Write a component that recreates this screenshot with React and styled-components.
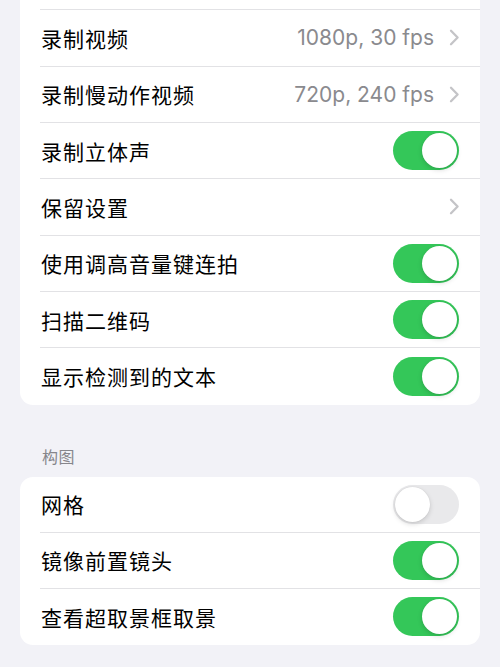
import styled, { createGlobalStyle } from "styled-components";

const GlobalStyle = createGlobalStyle`
  html, body {
    margin: 0;
    padding: 0;
    background: #f2f2f7;
  }
  body {
    font-family: Inter, "Noto Sans CJK SC", sans-serif;
    -webkit-font-smoothing: antialiased;
  }
`;

const Page = styled.div`
  width: 500px;
  height: 667px;
  overflow: hidden;
  background: #f2f2f7;
  display: flex;
  flex-direction: column;
`;

const Card = styled.div`
  margin: ${(p) => p.$top || 0}px 20px 0;
  background: #fff;
  border-radius: 13px;
  overflow: hidden;
  display: flex;
  flex-direction: column;
`;

const Row = styled.div`
  height: ${(p) => p.$h}px;
  padding-left: 20px;
  display: flex;
  flex-shrink: 0;
`;

const RowBody = styled.div`
  flex: 1;
  display: flex;
  align-items: center;
  padding: 0 21px 0 1px;
  border-bottom: ${(p) => (p.$last ? "none" : "1px solid #e2e2e5")};
  box-sizing: border-box;
`;

const Label = styled.span`
  flex: 1;
  font-size: 21px;
  color: #000;
  letter-spacing: 1px;
`;

const Value = styled.span`
  font-size: 21px;
  color: #8a8a8e;
  margin-right: 15px;
`;

const Header = styled.div`
  margin: 41px 0 9px;
  padding: 0 42px;
  font-size: 16px;
  line-height: 22px;
  color: #86868b;
  letter-spacing: 0.5px;
`;

const Track = styled.div`
  width: 66px;
  height: 39px;
  border-radius: 20px;
  background: ${(p) => (p.$on ? "#34c759" : "#e9e9eb")};
  display: flex;
  align-items: center;
  justify-content: ${(p) => (p.$on ? "flex-end" : "flex-start")};
  padding: 0 2px;
  box-sizing: border-box;
`;

const Knob = styled.div`
  width: 35px;
  height: 35px;
  border-radius: 50%;
  background: #fff;
  box-shadow: 0 2px 5px rgba(0, 0, 0, 0.15), 0 0 1px rgba(0, 0, 0, 0.12);
`;

function Switch({ on }) {
  return (
    <Track $on={on}>
      <Knob />
    </Track>
  );
}

function Chevron() {
  return (
    <svg width="11" height="17" viewBox="0 0 11 17" style={{ marginRight: -1 }}>
      <path
        d="M2 1.8 L8.6 8.5 L2 15.2"
        fill="none"
        stroke="#c4c4c7"
        strokeWidth="2.3"
        strokeLinecap="round"
        strokeLinejoin="round"
      />
    </svg>
  );
}

function SettingRow({ label, value, chevron, toggle, last, h }) {
  return (
    <Row $h={h}>
      <RowBody $last={last}>
        <Label>{label}</Label>
        {value && <Value>{value}</Value>}
        {chevron && <Chevron />}
        {toggle !== undefined && <Switch on={toggle} />}
      </RowBody>
    </Row>
  );
}

const capture = [
  { label: "" },
  { label: "录制视频", value: "1080p, 30 fps", chevron: true },
  { label: "录制慢动作视频", value: "720p, 240 fps", chevron: true },
  { label: "录制立体声", toggle: true },
  { label: "保留设置", chevron: true },
  { label: "使用调高音量键连拍", toggle: true },
  { label: "扫描二维码", toggle: true },
  { label: "显示检测到的文本", toggle: true },
];

const composition = [
  { label: "网格", toggle: false },
  { label: "镜像前置镜头", toggle: true },
  { label: "查看超取景框取景", toggle: true },
];

export default function App() {
  return (
    <>
      <GlobalStyle />
      <Page>
        <Card $top={-46}>
          {capture.map((r, i) => (
            <SettingRow key={i} {...r} h={56.33} last={i === capture.length - 1} />
          ))}
        </Card>
        <Header>构图</Header>
        <Card>
          {composition.map((r, i) => (
            <SettingRow key={i} {...r} h={56} last={i === composition.length - 1} />
          ))}
        </Card>
      </Page>
    </>
  );
}
